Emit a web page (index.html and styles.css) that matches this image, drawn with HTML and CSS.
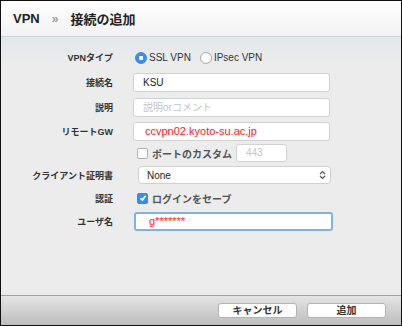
FILE: index.html
```html
<!DOCTYPE html>
<html lang="ja">
<head>
  <meta charset="UTF-8">
  <title>VPN 接続の追加</title>
  <link rel="stylesheet" href="styles.css">
</head>
<body>

  <div class="ventana">
    <!-- Cabecera -->
    <div class="cabecera">
      <span class="migas">VPN</span>
      <span class="separador">»</span>
      <span class="migas">接続の追加</span>
    </div>

    <!-- Formulario -->
    <div class="cuerpo">
      <div class="formulario">
        <div class="etiqueta">VPNタイプ</div>
        <div class="control radios">
          <span class="radio activo"></span><span class="texto-radio">SSL VPN</span>
          <span class="radio"></span><span class="texto-radio">IPsec VPN</span>
        </div>

        <div class="etiqueta">接続名</div>
        <div class="control"><div class="campo">KSU</div></div>

        <div class="etiqueta">説明</div>
        <div class="control"><div class="campo vacio">説明orコメント</div></div>

        <div class="etiqueta">リモートGW</div>
        <div class="control"><div class="campo rojo">ccvpn02.kyoto-su.ac.jp</div></div>

        <div class="etiqueta"></div>
        <div class="control fila-casilla">
          <span class="casilla"></span><span class="texto-casilla">ポートのカスタム</span>
          <div class="campo puerto vacio">443</div>
        </div>

        <div class="etiqueta">クライアント証明書</div>
        <div class="control">
          <div class="selector">
            <span>None</span>
            <svg width="7" height="10" viewBox="0 0 7 10"><path d="M1 4 L3.5 1.5 L6 4 M1 6 L3.5 8.5 L6 6" fill="none" stroke="#555" stroke-width="1.2"/></svg>
          </div>
        </div>

        <div class="etiqueta">認証</div>
        <div class="control fila-casilla">
          <span class="casilla marcada">
            <svg width="8" height="8" viewBox="0 0 8 8"><path d="M1.5 4.2 L3.3 6 L6.6 1.8" fill="none" stroke="#fff" stroke-width="1.5"/></svg>
          </span><span class="texto-casilla">ログインをセーブ</span>
        </div>

        <div class="etiqueta">ユーザ名</div>
        <div class="control"><div class="campo foco rojo">g*******</div></div>
      </div>
    </div>

    <!-- Pie con botones -->
    <div class="pie">
      <button class="boton">キャンセル</button>
      <button class="boton">追加</button>
    </div>
  </div>

</body>
</html>
```

FILE: styles.css
```css
    body {
      margin: 0;
      padding: 0;
      font-family: "Liberation Sans", "Noto Sans CJK JP", sans-serif;
      background-color: #ffffff;
    }

    .ventana {
      width: 402px;
      height: 326px;
      box-sizing: border-box;
      border: 1px solid #111;
      display: flex;
      flex-direction: column;
    }

    .cabecera {
      height: 35px;
      border-bottom: 1px solid #cfd3d6;
      background: linear-gradient(#ffffff, #f2f2f2);
      display: flex;
      align-items: center;
      padding-left: 12px;
      gap: 12px;
    }

    .migas {
      font-size: 13px;
      font-weight: bold;
      color: #222;
    }

    .separador {
      font-size: 12px;
      color: #999;
      font-weight: bold;
    }

    .cuerpo {
      flex: 1;
      background: linear-gradient(#e3e8eb, #ececec 30px);
      padding-top: 8px;
    }

    .formulario {
      display: grid;
      grid-template-columns: 112px 1fr;
      grid-template-rows: 25px 25px 24px 24px 20px 24px 22px 24px;
      column-gap: 20px;
      align-items: center;
    }

    .etiqueta {
      text-align: right;
      font-size: 9px;
      font-weight: bold;
      color: #333;
    }

    .control {
      display: flex;
      align-items: center;
      font-size: 10px;
      color: #333;
    }

    .radios {
      padding-left: 2px;
    }

    .radio {
      width: 10px;
      height: 10px;
      border-radius: 50%;
      border: 1px solid #a9a9a9;
      background-color: #fff;
      box-sizing: content-box;
    }

    .radio.activo {
      border-color: #3a87e0;
      background: radial-gradient(circle, #fff 0 2px, #3d8ee8 2.5px);
    }

    .texto-radio {
      margin-left: 2px;
      margin-right: 9px;
      font-size: 10px;
    }

    .campo {
      width: 197px;
      height: 19px;
      box-sizing: border-box;
      background-color: #fff;
      border: 1px solid #d2d2d2;
      border-radius: 3px;
      padding-left: 9px;
      font-size: 10px;
      line-height: 17px;
      color: #222;
    }

    .campo.vacio {
      color: #c4c4c4;
    }

    .campo.rojo {
      color: #ff1a1a;
      font-size: 11px;
      padding-left: 11px;
    }

    .campo.foco {
      width: 199px;
      margin-left: 1px;
      border: 2px solid #7eb3ea;
      line-height: 15px;
      padding-left: 13px;
    }

    .fila-casilla {
      padding-left: 4px;
    }

    .casilla {
      width: 9px;
      height: 9px;
      border: 1px solid #b0b0b0;
      border-radius: 2px;
      background-color: #fff;
      display: flex;
      align-items: center;
      justify-content: center;
    }

    .casilla.marcada {
      border-color: #3a87e0;
      background-color: #3d8ee8;
    }

    .texto-casilla {
      margin-left: 4px;
      font-size: 10px;
      font-weight: bold;
      color: #555;
    }

    .campo.puerto {
      width: 51px;
      height: 18px;
      margin-left: 4px;
      padding-left: 9px;
      line-height: 16px;
    }

    .selector {
      width: 193px;
      height: 18px;
      margin-left: 5px;
      box-sizing: border-box;
      background-color: #fff;
      border: 1px solid #d0d0d0;
      border-radius: 4px;
      display: flex;
      align-items: center;
      justify-content: space-between;
      padding: 0 4px 0 8px;
      font-size: 10px;
      color: #222;
    }

    .pie {
      height: 29px;
      border-top: 1px solid #9f9f9f;
      background: linear-gradient(#e4e4e4, #bdbdbd);
      display: flex;
      justify-content: flex-end;
      align-items: center;
      gap: 10px;
      padding-right: 15px;
    }

    .boton {
      width: 79px;
      height: 15px;
      padding: 0;
      background-color: #fff;
      border: 1px solid #b3b3b3;
      border-radius: 3px;
      font-family: "Liberation Sans", "Noto Sans CJK JP", sans-serif;
      font-size: 10px;
      font-weight: bold;
      color: #333;
      line-height: 13px;
    }
```
